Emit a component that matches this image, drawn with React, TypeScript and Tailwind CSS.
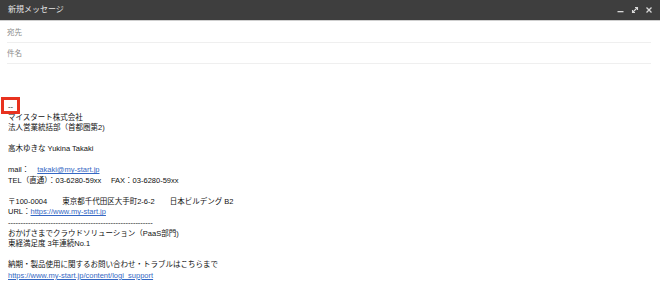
import React from "react";

const font = { fontFamily: '"Liberation Sans", "Noto Sans CJK JP", sans-serif' };

function Line({ children }: { children?: React.ReactNode }) {
  return <div className="h-[10.56px] whitespace-pre">{children ?? "\u00a0"}</div>;
}

function A({ children }: { children: React.ReactNode }) {
  return <span className="text-[#3568c4] underline decoration-[0.5px] underline-offset-[1px]">{children}</span>;
}

export default function App() {
  return (
    <div className="relative w-[660px] h-[290px] bg-white overflow-hidden" style={font}>
      <div className="h-[21px] bg-[#3e3e3e] border-b border-[#cfcfcf] flex items-center justify-between pl-[8px] pr-[7px]">
        <span className="text-[8px] text-[#e6e6e6] leading-none">新規メッセージ</span>
        <div className="flex items-center gap-[6px]">
          <svg width="8" height="8" viewBox="0 0 8 8"><rect x="0.5" y="5" width="6" height="1.3" fill="#d8d8d8" /></svg>
          <svg width="8" height="8" viewBox="0 0 8 8" fill="none" stroke="#d8d8d8" strokeWidth="1.1">
            <path d="M1.5 6.5 L6.5 1.5" />
            <path d="M4 1.5 H6.5 V4" />
            <path d="M1.5 4 V6.5 H4" />
          </svg>
          <svg width="8" height="8" viewBox="0 0 8 8" fill="none" stroke="#d8d8d8" strokeWidth="1.3">
            <path d="M1.5 1.5 L6.5 6.5 M6.5 1.5 L1.5 6.5" />
          </svg>
        </div>
      </div>
      <div className="ml-[7px] mr-[9px]">
        <div className="h-[22px] pt-[2px] border-b border-[#efefef] flex items-center text-[7.5px] text-[#8c8c8c]">宛先</div>
        <div className="h-[21px] pt-[2px] border-b border-[#efefef] flex items-center text-[7.5px] text-[#8c8c8c]">件名</div>
      </div>
      <div className="pl-[8px] pt-[38px] text-[7.5px] leading-[10.56px] text-[#111]">
        <Line>--</Line>
        <Line>マイスタート株式会社</Line>
        <Line>法人営業統括部（首都圏第2)</Line>
        <Line />
        <Line>高木ゆきな Yukina Takaki</Line>
        <Line />
        <Line>
          mail：<span className="inline-block w-[8px]" /><A>takaki@my-start.jp</A>
        </Line>
        <Line>TEL（直通）：03-6280-59xx　 FAX：03-6280-59xx</Line>
        <Line />
        <Line>〒100-0004　　東京都千代田区大手町2-6-2　　日本ビルデング B2</Line>
        <Line>
          URL：<A>https://www.my-start.jp</A>
        </Line>
        <Line>----------------------------------------------------------</Line>
        <Line>おかげさまでクラウドソリューション（PaaS部門)</Line>
        <Line>東経満足度 3年連続No.1</Line>
        <Line />
        <Line>納期・製品使用に関するお問い合わせ・トラブルはこちらまで</Line>
        <Line>
          <A>https://www.my-start.jp/content/logi_support</A>
        </Line>
      </div>
      <div className="absolute left-[1px] top-[97px] w-[19px] h-[17px] border-[3px] border-[#e8321f]" />
    </div>
  );
}
